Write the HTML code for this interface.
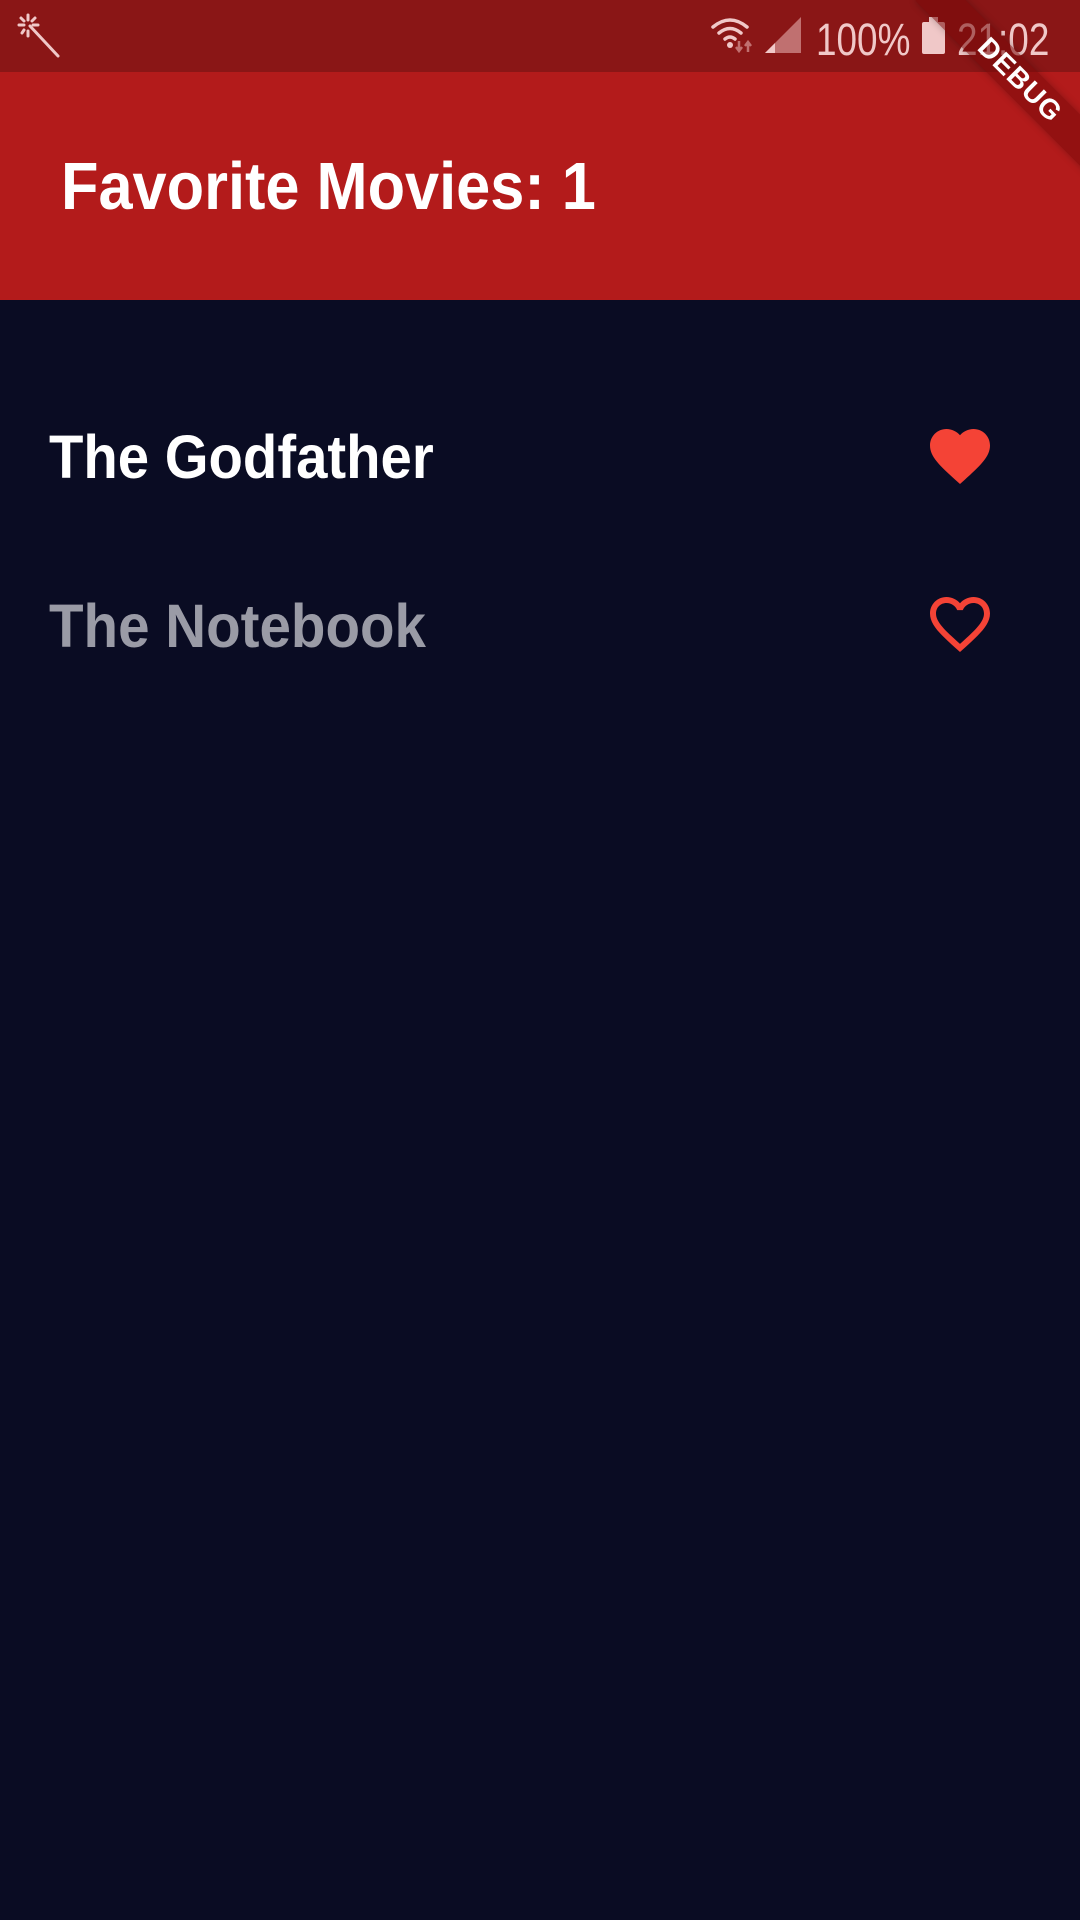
<!DOCTYPE html>
<html><head><meta charset="utf-8"><style>
html,body{margin:0;padding:0;width:1080px;height:1920px;overflow:hidden;background:#0a0c23;font-family:"Liberation Sans",sans-serif}
.sb{position:absolute;left:0;top:0;width:1080px;height:72px;background:#8a1616}
.ab{position:absolute;left:0;top:72px;width:1080px;height:228px;background:#b31b1b}
.t{position:absolute;white-space:nowrap;line-height:1;transform-origin:0 0}
</style></head><body>
<div class="sb"></div>
<div class="ab"></div>
<svg style="position:absolute;left:14px;top:12px" width="50" height="50" viewBox="0 0 50 50">
<g stroke="#f0c8c8" stroke-width="3" stroke-linecap="round">
<line x1="16" y1="14" x2="44" y2="44"/>
<line x1="14" y1="3" x2="14" y2="8"/>
<line x1="5" y1="13" x2="10" y2="13"/>
<line x1="19" y1="13" x2="24" y2="13"/>
<line x1="7" y1="6" x2="10" y2="9"/>
<line x1="21" y1="6" x2="18" y2="9"/>
<line x1="8" y1="21" x2="10" y2="18"/>
<line x1="14" y1="19" x2="14" y2="24"/>
</g></svg>
<svg style="position:absolute;left:710px;top:16px" width="50" height="40" viewBox="0 0 50 40">
<g fill="none" stroke="#f0c8c8" stroke-width="3.5" stroke-linecap="round">
<path d="M3 11 Q20 -3 37 11"/><path d="M9 17 Q20 8 31 17"/><path d="M15 23 Q20 19 25 23"/></g>
<circle cx="20" cy="29" r="3" fill="#f0c8c8"/>
<path d="M29 25v9m-3-3l3 4 3-4" stroke="#c07070" stroke-width="2.5" fill="none"/>
<path d="M38 36v-9m-3 3l3-4 3 4" stroke="#c07070" stroke-width="2.5" fill="none"/>
</svg>
<svg style="position:absolute;left:765px;top:17px" width="38" height="38" viewBox="0 0 38 38">
<polygon points="36,0 36,36 0,36" fill="#c07070"/>
<polygon points="10,26 10,36 0,36" fill="#f0c8c8"/>
</svg>
<div class="t" style="left:816px;top:17px;font-size:45px;color:#f0c8c8;transform:scaleX(0.82)">100%</div>
<div style="position:absolute;left:922px;top:22px;width:23px;height:32px;background:#f0c8c8;border-radius:2px"></div>
<div style="position:absolute;left:929px;top:17px;width:9px;height:6px;background:#f0c8c8"></div>
<div class="t" style="left:957px;top:17px;font-size:45px;color:#f0c8c8;transform:scaleX(0.82)">21:02</div>
<div style="position:absolute;left:890px;top:62px;width:260px;height:36px;background:rgba(120,10,10,0.55);transform:rotate(45deg);transform-origin:50% 50%;box-shadow:0 0 8px rgba(0,0,0,0.25);display:flex;align-items:center;justify-content:center">
<span style="color:#fff;font-weight:bold;font-size:28px;letter-spacing:1px">DEBUG</span></div>
<div class="t" style="left:61px;top:153px;font-size:67px;color:#fff;font-weight:bold;transform:scaleX(0.915)">Favorite Movies: 1</div>
<div class="t" style="left:49px;top:427px;font-size:61px;color:#fff;font-weight:bold;transform:scaleX(0.923)">The Godfather</div>
<div class="t" style="left:49px;top:596px;font-size:61px;color:#9a9ba6;font-weight:bold;transform:scaleX(0.927)">The Notebook</div>
<svg style="position:absolute;left:924px;top:420px" width="72" height="72" viewBox="0 0 24 24"><path fill="#f44336" d="M12 21.35l-1.45-1.32C5.4 15.36 2 12.28 2 8.5 2 5.42 4.42 3 7.5 3c1.74 0 3.41.81 4.5 2.09C13.09 3.81 14.76 3 16.5 3 19.58 3 22 5.42 22 8.5c0 3.78-3.4 6.86-8.55 11.54L12 21.35z"/></svg>
<svg style="position:absolute;left:924px;top:588px" width="72" height="72" viewBox="0 0 24 24"><path fill="#f44336" d="M16.5 3c-1.74 0-3.41.81-4.5 2.09C10.91 3.81 9.24 3 7.5 3 4.42 3 2 5.42 2 8.5c0 3.78 3.4 6.86 8.55 11.54L12 21.35l1.45-1.32C18.6 15.36 22 12.28 22 8.5 22 5.42 19.58 3 16.5 3zm-4.4 15.55l-.1.1-.1-.1C7.14 14.24 4 11.390 4 8.5 4 6.5 5.5 5 7.5 5c1.54 0 3.04.99 3.57 2.36h1.87C13.46 5.99 14.96 5 16.5 5c2 0 3.5 1.5 3.5 3.5 0 2.89-3.14 5.74-7.9 10.05z"/></svg>
</body></html>
